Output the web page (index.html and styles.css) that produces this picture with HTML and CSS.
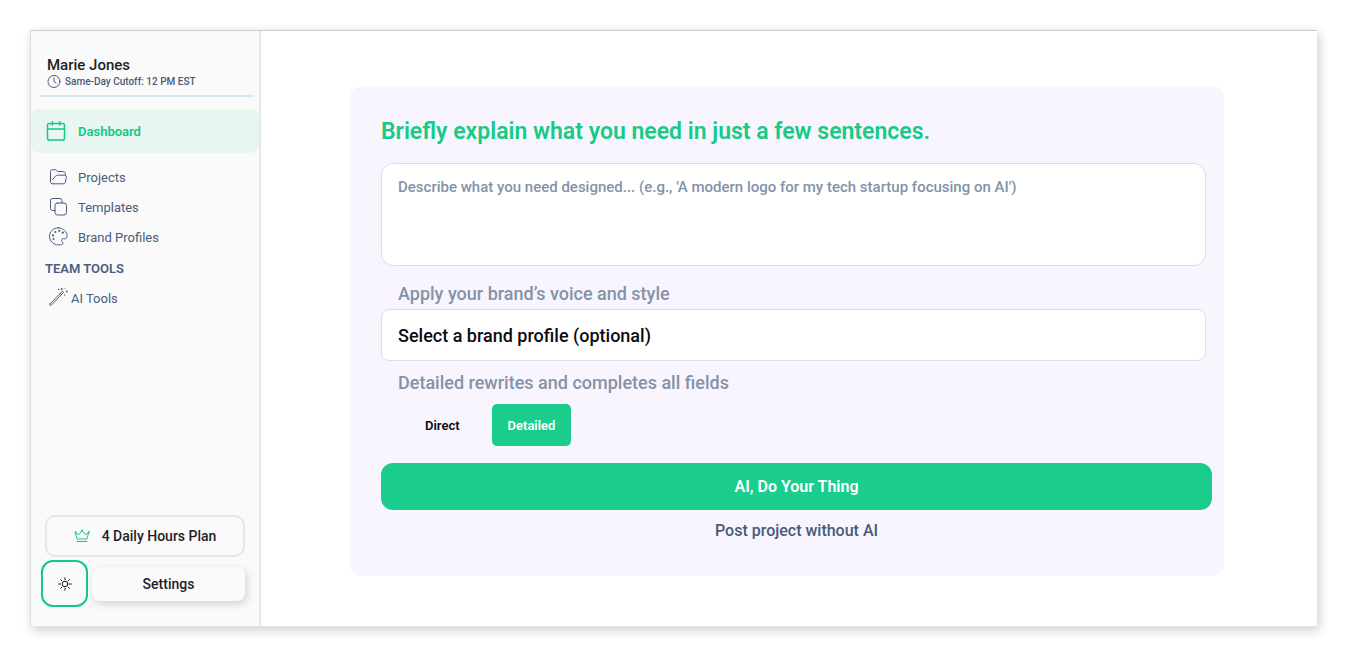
FILE: index.html
```
<!DOCTYPE html>
<html lang="en">
<head>
    <meta charset="UTF-8">
    <meta name="viewport" content="width=device-width, initial-scale=1.0">
    <title>Dashboard</title>
    <link rel="stylesheet" href="styles.css">
</head>
<body>
    <div class="app">
        <aside class="sidebar">
            <div class="profile">
                <div class="profile-name">Marie Jones</div>
                <div class="cutoff">
                    <svg width="14" height="14" viewBox="0 0 14 14"><circle cx="7" cy="6.500" r="6"/><path d="M7 3v3.700l2 1.300"/></svg>
                    <span>Same-Day Cutoff: 12 PM EST</span>
                </div>
            </div>

            <nav class="nav">
                <a href="#" class="nav-link active">
                    <svg width="20" height="20" viewBox="0 0 20 20"><rect x="1.500" y="2.500" width="17" height="16.500" rx="1.800"/><path d="M1.500 8h17M6.400 .7v3.300M13.800 .7v3.300"/></svg>
                    <span>Dashboard</span>
                </a>
                <a href="#" class="nav-link">
                    <svg width="20" height="20" viewBox="0 0 20 20"><path d="M4.500 16.800c-1.300 0-2-.7-2-2V4.500c0-1.100.7-1.800 1.800-1.800h2.900c.6 0 1 .2 1.400.7l1 1.200h5.800c1.200 0 1.900.7 1.900 1.800v1.800M4.500 16.800h10.800c1.200 0 1.900-.6 2.100-1.700l.9-4.700c.3-1.400-.5-2.200-1.800-2.200H9.600c-1 0-1.600.4-2.200 1.100l-2.900 3.300"/></svg>
                    <span>Projects</span>
                </a>
                <a href="#" class="nav-link">
                    <svg width="20" height="20" viewBox="0 0 20 20"><rect x="7" y="6" width="11.500" height="12" rx="2.500"/><path d="M7 13.500H4.500a2 2 0 0 1-2-2V3.500a2 2 0 0 1 2-2h7.500a2 2 0 0 1 2 2V6"/></svg>
                    <span>Templates</span>
                </a>
                <a href="#" class="nav-link">
                    <svg width="20" height="20" viewBox="0 0 20 20"><path d="M10.300 .8C5.400 .8 1.500 4.600 1.500 9.300s3.900 8.600 8.900 8.600c2.600 0 4.600-.5 4.600-1.600 0-1-1.400-1.400-1.400-2.900 0-1.300.9-2 2.100-1.700 1.500.4 3.100-.3 3.300-2C19.500 5 15.300.8 10.300.8z"/><g class="dots"><circle cx="5.500" cy="12" r="1"/><circle cx="5" cy="8.400" r="1.100"/><circle cx="7.300" cy="5" r="1.100"/><circle cx="11.300" cy="3.800" r="1.100"/><circle cx="14.800" cy="5.700" r="1.100"/></g></svg>
                    <span>Brand Profiles</span>
                </a>
            </nav>

            <h2 class="nav-title">TEAM TOOLS</h2>
            <nav class="nav tools">
                <a href="#" class="nav-link">
                    <svg width="20" height="20" viewBox="0 0 20 20"><path d="M1.900 16 14.400 3.200l1.200 1.200L3.200 17.200q-.8.5-1.200 0t-.1-1.200zM12.200 5.500l1.200 1.200"/><g class="dots"><path d="M13.800 -.8l.5 1.300 1.300.5-1.300.5-.5 1.300-.5-1.300-1.300-.5 1.300-.5z"/><circle cx="10.600" cy="1.500" r=".8"/><circle cx="18.900" cy="3.500" r=".9"/><circle cx="16.700" cy="7" r=".7"/><circle cx="17" cy=".8" r=".5"/></g></svg>
                    <span>AI Tools</span>
                </a>
            </nav>

            <div class="sidebar-footer">
                <button type="button" class="plan-btn">
                    <svg width="16" height="14" viewBox="0 0 16 14"><path d="M3 9.600 1.400 3.800 4.800 5.600 8 1.600l3.200 4 3.400-1.800L13 9.600zM3 12.500h10"/><circle cx="1.300" cy="3" r=".5"/><circle cx="8" cy="1.300" r=".5"/><circle cx="14.700" cy="3" r=".5"/></svg>
                    <span>4 Daily Hours Plan</span>
                </button>
                <div class="footer-row">
                    <button type="button" class="theme-btn" aria-label="Theme">
                        <svg width="14" height="14" viewBox="0 0 14 14"><circle cx="7" cy="7" r="2.800"/><path d="M7 .7v2M7 11.300v2M.7 7h2M11.300 7h2M2.600 2.600l1.300 1.300M10.100 10.100l1.300 1.300M2.600 11.400l1.300-1.300M10.100 3.900l1.300-1.300"/></svg>
                    </button>
                    <button type="button" class="settings-btn">Settings</button>
                </div>
            </div>
        </aside>

        <main class="main">
            <form class="card">
                <label class="card-title" for="brief">Briefly explain what you need in just a few sentences.</label>
                <textarea class="field brief" id="brief" placeholder="Describe what you need designed... (e.g., 'A modern logo for my tech startup focusing on AI')"></textarea>

                <label class="hint" for="brand">Apply your brand’s voice and style</label>
                <select class="field brand" id="brand">
                    <option>Select a brand profile (optional)</option>
                </select>

                <p class="hint" id="modeHint">Detailed rewrites and completes all fields</p>
                <div class="modes" role="group" aria-labelledby="modeHint">
                    <button type="button" class="mode">Direct</button>
                    <button type="button" class="mode selected">Detailed</button>
                </div>

                <button type="submit" class="submit-btn">AI, Do Your Thing</button>
                <a href="#" class="post-link">Post project without AI</a>
            </form>
        </main>
    </div>
</body>
</html>
```

FILE: styles.css
```
* {
    margin: 0;
    padding: 0;
    box-sizing: border-box;
}

body {
    min-height: 100vh;
    padding: 30px 33px 34px 30px;
    display: flex;
    font-family: Roboto, sans-serif;
    background-color: #fff;
    color: #1e1e28;
}

button,
select,
textarea {
    font-family: inherit;
    cursor: pointer;
}

a {
    color: inherit;
    text-decoration: none;
}

svg {
    flex: none;
    overflow: visible;
    fill: none;
    stroke: currentColor;
    stroke-width: 1;
    stroke-linecap: round;
    stroke-linejoin: round;
}

.dots {
    fill: currentColor;
    stroke: none;
}

.app {
    flex: 1;
    display: flex;
    border-top: 1px solid #cbcbcb;
    border-left: 1px solid #dedede;
    border-bottom: 1px solid #e4e4e4;
    box-shadow: 2px 3px 10px rgba(0, 0, 0, 0.2);
}

/* sidebar */

.sidebar {
    width: 230px;
    flex: none;
    display: flex;
    flex-direction: column;
    background-color: #fafafa;
    border-right: 2px solid #e1e7f2;
}

.profile {
    margin: 0 5px 12px 8px;
    padding: 24px 8px 6px;
    border-bottom: 2px solid #dde6f4;
}

.profile-name {
    font-size: 15px;
    line-height: 20px;
    font-weight: 500;
}

.cutoff {
    display: flex;
    align-items: center;
    gap: 4px;
    font-size: 10px;
    line-height: 14px;
    font-weight: 500;
    color: #475a78;
}

.nav {
    display: flex;
    flex-direction: column;
}

.nav-link {
    display: flex;
    align-items: center;
    gap: 10px;
    height: 30px;
    padding-left: 17px;
    font-size: 13px;
    color: #4a5d7c;
}

.nav-link.active {
    height: 44px;
    gap: 12px;
    padding-left: 15px;
    margin-bottom: 9px;
    border-radius: 8px;
    background-color: #e8f5f0;
    color: #12ca83;
    font-weight: 600;
}

.nav-link.active svg {
    stroke-width: 1.5;
}

.nav-title {
    padding: 9px 0 6px 14px;
    font-size: 13px;
    line-height: 16px;
    font-weight: 600;
    color: #4a5d7c;
}

.tools .nav-link {
    gap: 3px;
}

.sidebar-footer {
    margin-top: auto;
    padding: 0 14px 19px 10px;
}

.plan-btn {
    display: flex;
    align-items: center;
    justify-content: center;
    gap: 12px;
    width: 200px;
    height: 42px;
    margin: 0 0 3px 4px;
    border: 2px solid #e0e7f2;
    border-radius: 10px;
    background-color: #fafafa;
    font-size: 14px;
    font-weight: 500;
    color: #1e1e28;
}

.plan-btn svg {
    color: #12ca83;
}

.footer-row {
    display: flex;
    align-items: center;
    gap: 4px;
}

.theme-btn {
    display: flex;
    align-items: center;
    justify-content: center;
    width: 47px;
    height: 47px;
    border: 2px solid #12ca83;
    border-radius: 12px;
    background-color: #fafafa;
    color: #1e1e28;
}

.settings-btn {
    flex: 1;
    height: 34px;
    border: none;
    border-radius: 8px;
    background-color: #fafafa;
    box-shadow: 2px 3px 8px rgba(0, 0, 0, 0.16);
    font-size: 14px;
    font-weight: 500;
    color: #1e1e28;
}

/* brief form */

.main {
    flex: 1;
    padding: 55px 93px 50px 89px;
}

.card {
    display: flex;
    flex-direction: column;
    padding: 31px 12px 35px 31px;
    border-radius: 12px;
    background-color: #f8f5ff;
}

.card-title {
    margin-bottom: 16px;
    font-size: 23px;
    line-height: 30px;
    font-weight: 600;
    color: #16cb85;
}

.field {
    margin-right: 6px;
    padding: 0 16px;
    border: 1px solid #dedee2;
    background-color: #fff;
    font-weight: 500;
    appearance: none;
}

.brief {
    height: 103px;
    padding-top: 13px;
    margin-bottom: 16px;
    border-radius: 12px;
    font-size: 15px;
    line-height: 20px;
    resize: none;
}

.brief::placeholder {
    color: #8592a8;
}

.hint {
    padding-left: 17px;
    font-size: 18px;
    line-height: 24px;
    font-weight: 500;
    color: #8592a6;
}

.brand {
    height: 52px;
    margin-top: 3px;
    margin-bottom: 10px;
    border-radius: 8px;
    font-size: 18px;
    color: #0b0b10;
}

.modes {
    display: flex;
    gap: 18px;
    margin: 9px 0 17px 30px;
}

.mode {
    height: 42px;
    padding: 0 14px;
    border: none;
    border-radius: 5px;
    background-color: transparent;
    font-size: 13px;
    font-weight: 600;
    color: #0b0b10;
}

.mode.selected {
    padding: 0 16px;
    background-color: #1acd8d;
    color: #fff;
}

.submit-btn {
    height: 47px;
    margin-bottom: 11px;
    border: none;
    border-radius: 12px;
    background-color: #1acd8d;
    font-size: 16px;
    font-weight: 600;
    color: #fff;
}

.post-link {
    align-self: center;
    font-size: 16px;
    line-height: 20px;
    font-weight: 500;
    color: #475a78;
}
```
